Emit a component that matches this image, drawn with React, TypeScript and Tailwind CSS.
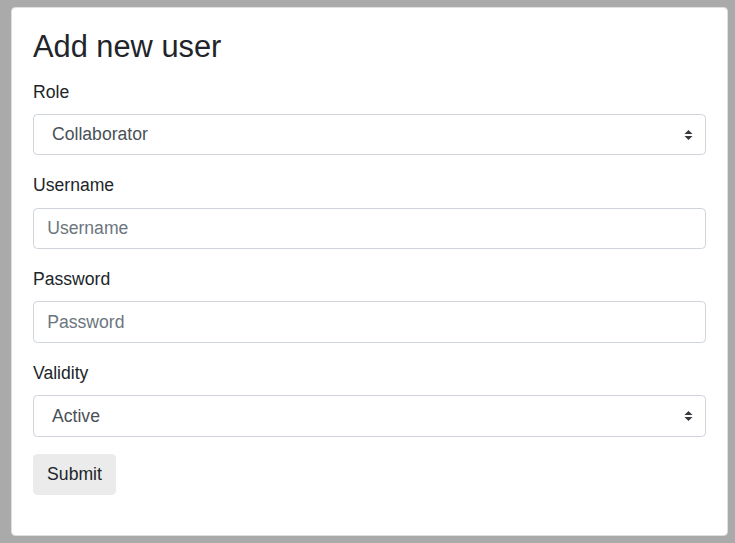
import type { ReactNode } from 'react';

const font = { fontFamily: '"Liberation Sans", Arial, sans-serif' };

function Field({ label, children }: { label: string; children: ReactNode }) {
  return (
    <div className="mb-[17px] flex flex-col">
      <label className="mb-[8.8px] text-[17.6px] leading-[26.4px] text-[#212529]">{label}</label>
      {children}
    </div>
  );
}

function SelectBox({ value }: { value: string }) {
  return (
    <div className="relative">
      <select
        defaultValue={value}
        className="block h-[41.6px] w-full appearance-none rounded-[4.4px] border border-[#ced4da] bg-white pr-[30px] pl-[18px] text-[17.6px] leading-[26.4px] text-[#495057] outline-none"
      >
        <option>{value}</option>
      </select>
      <svg
        className="pointer-events-none absolute top-1/2 right-[13px] -translate-y-1/2"
        width="9"
        height="11"
        viewBox="0 0 9 11"
      >
        <path d="M4.5 0.5 L8.5 4.5 L0.5 4.5 Z" fill="#343a40" />
        <path d="M0.5 6.5 L8.5 6.5 L4.5 10.5 Z" fill="#343a40" />
      </svg>
    </div>
  );
}

function TextBox({ placeholder, type = 'text' }: { placeholder: string; type?: string }) {
  return (
    <input
      type={type}
      placeholder={placeholder}
      className="block h-[41.6px] w-full rounded-[4.4px] border border-[#ced4da] bg-white px-[13.2px] text-[17.6px] leading-[26.4px] text-[#495057] outline-none placeholder:text-[#6c757d]"
    />
  );
}

export default function App() {
  return (
    <div className="h-[543px] w-[735px] bg-[#aaaaaa] pt-[7px] pl-[11px]" style={font}>
      <div className="h-[529px] w-[717px] rounded-[4.4px] border border-[#dfdfdf] bg-white px-[21px] pt-[21px]">
        <h3 className="mb-[12.7px] text-[30.8px] leading-[36.96px] font-normal text-[#212529]">Add new user</h3>
        <form className="flex flex-col" onSubmit={(e) => e.preventDefault()}>
          <Field label="Role">
            <SelectBox value="Collaborator" />
          </Field>
          <Field label="Username">
            <TextBox placeholder="Username" />
          </Field>
          <Field label="Password">
            <TextBox placeholder="Password" type="password" />
          </Field>
          <Field label="Validity">
            <SelectBox value="Active" />
          </Field>
          <div>
            <button
              type="submit"
              className="h-[41px] w-[83px] rounded-[4.4px] bg-[#ebebeb] text-[17.6px] leading-[26.4px] text-[#212529]"
            >
              Submit
            </button>
          </div>
        </form>
      </div>
    </div>
  );
}
